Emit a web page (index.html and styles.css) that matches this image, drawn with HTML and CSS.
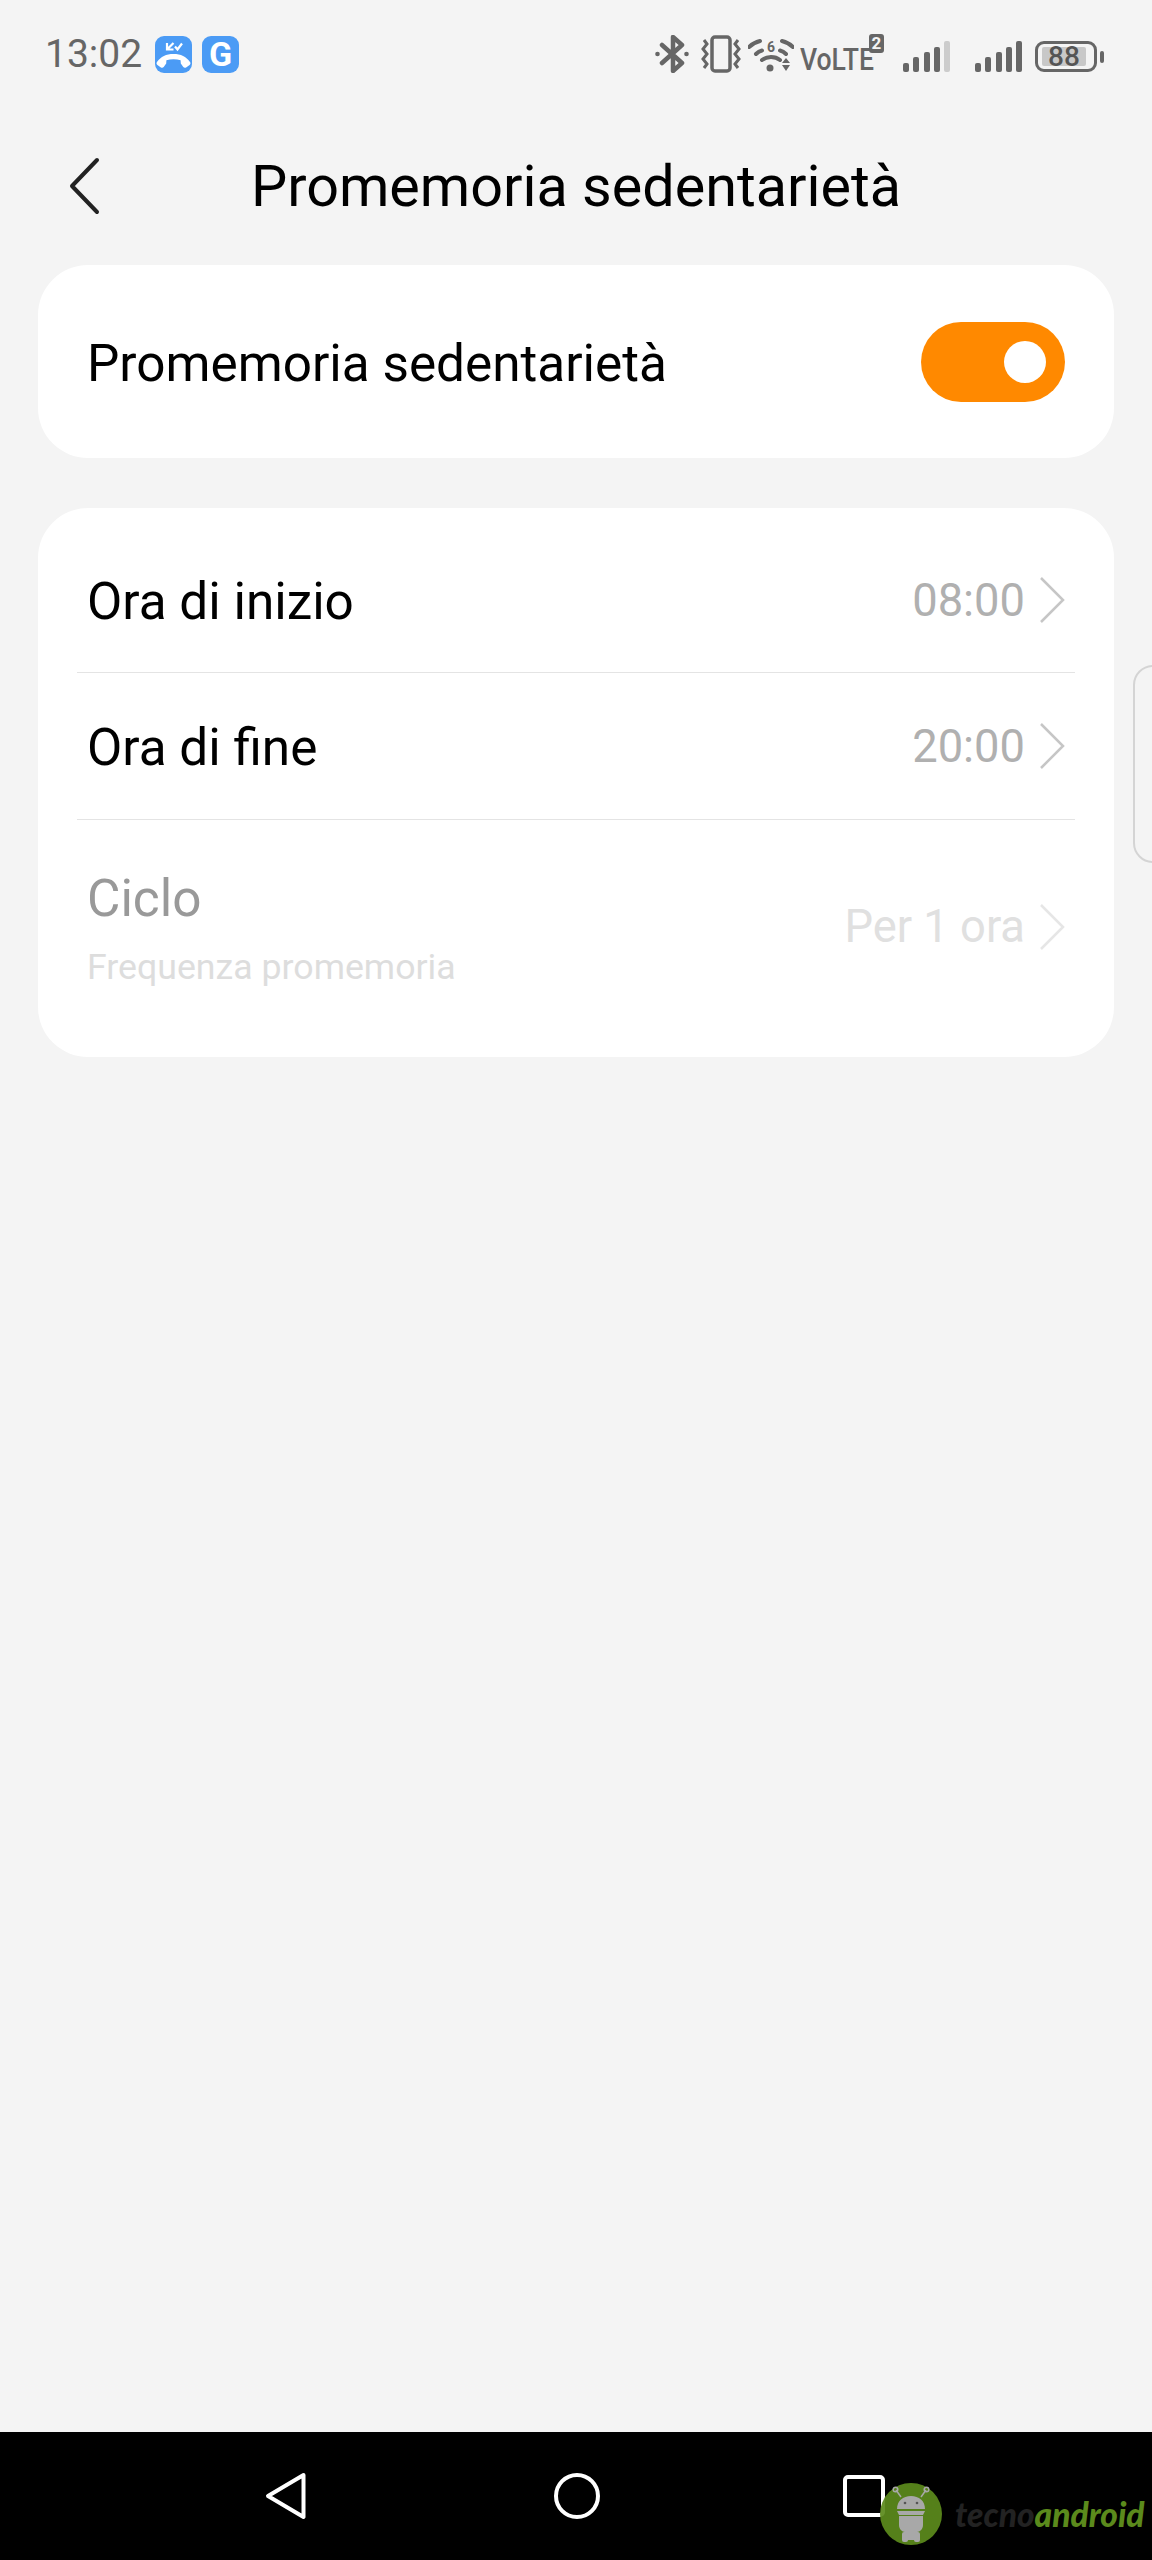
FILE: index.html
```html
<!DOCTYPE html>
<html>
<head>
  <meta charset="utf-8">
  <title>Promemoria sedentarietà</title>
  <link rel="stylesheet" href="styles.css">
</head>
<body>
  <!-- Status bar -->
  <div class="status-bar">
    <div class="status-left">
      <span class="clock">13:02</span>
      <span class="app-badge">
        <svg width="37" height="37" viewBox="0 0 37 37">
          <path d="M2 26c4-5.500 9-8 16.500-8s12.500 2.500 16.500 8c.8 1 .6 2.200-.4 3l-3.500 2.400c-1 .6-2.200.4-3-.6l-2.300-3.300-.2-3.300c-4.200-1.200-10-1.200-14.200 0l-.2 3.300-2.300 3.300c-.8 1-2 1.200-3 .6L2.400 29c-1-.8-1.200-2-.4-3z" fill="#fff"/>
          <path d="M12 7v6.500h6.500M12.500 13l6-6M20 10.500l2.500 3 4.500-6" fill="none" stroke="#fff" stroke-width="2.200"/>
        </svg>
      </span>
      <span class="app-badge app-letter">G</span>
    </div>
    <div class="status-right">
      <svg class="icon-bt" width="34" height="38" viewBox="0 0 34 38">
        <path d="M7 10l20 18-9 8V2l9 8L7 28" fill="none" stroke="#666" stroke-width="4.500" stroke-linejoin="round" stroke-linecap="round"/>
        <circle cx="2.500" cy="19" r="2.300" fill="#666"/>
        <circle cx="31.500" cy="19" r="2.300" fill="#666"/>
      </svg>
      <svg class="icon-vib" width="40" height="38" viewBox="0 0 40 38">
        <rect x="11" y="2" width="18" height="34" rx="3" fill="none" stroke="#666" stroke-width="3.500"/>
        <path d="M3 5l3 4-4 5 4 5-4 5 4 5-3 4M37 5l-3 4 4 5-4 5 4 5-4 5 3 4" fill="none" stroke="#666" stroke-width="3"/>
      </svg>
      <svg class="icon-wifi" width="46" height="38" viewBox="0 0 46 38">
        <path d="M1 12c3-3 7-5 11-6M34 6c4 1 8 3 11 6M8 19c2-2 4-3 6-3.500M32 15.500c2 .5 4 1.500 6 3.500M14 25c5-4 13-4 18 0" fill="none" stroke="#666" stroke-width="4" stroke-linecap="round"/>
        <text class="wifi-six" x="23" y="17" text-anchor="middle">6</text>
        <circle cx="22" cy="33" r="3.500" fill="#666"/>
        <path d="M34 28l4-5 4 5zM34 30h8l-4 6z" fill="#666"/>
      </svg>
      <span class="volte"><span class="volte-text">VoLTE</span><span class="volte-two">2</span></span>
      <svg class="icon-signal" width="47" height="32" viewBox="0 0 47 32">
        <rect x="0" y="22" width="6" height="9" rx="2" fill="#666"/>
        <rect x="10" y="16" width="6" height="15" rx="2" fill="#666"/>
        <rect x="21" y="11" width="6" height="20" rx="2" fill="#666"/>
        <rect x="31" y="6" width="6" height="25" rx="2" fill="#666"/>
        <rect x="41" y="0" width="6" height="31" rx="2" fill="#ccc"/>
      </svg>
      <svg class="icon-signal second" width="47" height="32" viewBox="0 0 47 32">
        <rect x="0" y="22" width="6" height="9" rx="2" fill="#666"/>
        <rect x="10" y="16" width="6" height="15" rx="2" fill="#666"/>
        <rect x="21" y="11" width="6" height="20" rx="2" fill="#666"/>
        <rect x="31" y="6" width="6" height="25" rx="2" fill="#666"/>
        <rect x="41" y="0" width="6" height="31" rx="2" fill="#666"/>
      </svg>
      <div class="battery">
        <span class="battery-body"><span class="battery-fill">88</span></span>
        <span class="battery-nub"></span>
      </div>
    </div>
  </div>

  <!-- Header -->
  <div class="header">
    <svg class="back" width="32" height="58" viewBox="0 0 32 58">
      <path d="M29 3L4 29l25 26" fill="none" stroke="#222" stroke-width="4" stroke-linecap="round" stroke-linejoin="round"/>
    </svg>
    <h1 class="title">Promemoria sedentarietà</h1>
  </div>

  <div class="content">
    <div class="card card-switch">
      <span class="label">Promemoria sedentarietà</span>
      <span class="toggle"><span class="knob"></span></span>
    </div>

    <div class="card card-list">
      <div class="row row-first">
        <span class="label">Ora di inizio</span>
        <span class="value">08:00</span>
        <svg class="chevron" width="26" height="48" viewBox="0 0 26 48"><path d="M2 2l22 22L2 46" fill="none" stroke="#c6c6c6" stroke-width="2.500"/></svg>
      </div>
      <div class="divider"></div>
      <div class="row row-second">
        <span class="label">Ora di fine</span>
        <span class="value">20:00</span>
        <svg class="chevron" width="26" height="48" viewBox="0 0 26 48"><path d="M2 2l22 22L2 46" fill="none" stroke="#c6c6c6" stroke-width="2.500"/></svg>
      </div>
      <div class="divider"></div>
      <div class="row row-third">
        <div class="label-stack">
          <span class="label muted">Ciclo</span>
          <span class="sub">Frequenza promemoria</span>
        </div>
        <span class="value faint">Per 1 ora</span>
        <svg class="chevron" width="26" height="48" viewBox="0 0 26 48"><path d="M2 2l22 22L2 46" fill="none" stroke="#e6e6e6" stroke-width="2.500"/></svg>
      </div>
    </div>
  </div>

  <div class="edge-handle"></div>

  <!-- Navigation bar -->
  <div class="nav-bar">
    <svg width="42" height="48" viewBox="0 0 42 48">
      <path d="M38.500 3L3 24l35.500 21z" fill="none" stroke="#fff" stroke-width="4" stroke-linejoin="round"/>
    </svg>
    <span class="nav-home"></span>
    <span class="nav-recent"></span>

    <div class="watermark">
      <svg width="62" height="62" viewBox="0 0 62 62">
        <circle cx="31" cy="31" r="31" fill="#5b8a1c" fill-opacity=".93"/>
        <path d="M21 14l-5-7M41 14l5-7" stroke="#a8a8a8" stroke-width="1.500"/>
        <circle cx="15.500" cy="6.500" r="2.300" fill="none" stroke="#a8a8a8" stroke-width="1.500"/>
        <circle cx="46.500" cy="6.500" r="2.300" fill="none" stroke="#a8a8a8" stroke-width="1.500"/>
        <path d="M17 26c0-8 6-13 14-13s14 5 14 13z" fill="#a8a8a8"/>
        <path d="M17 28h28l-2 4H19z" fill="#a8a8a8"/>
        <path d="M19 33h24v9c0 4-3 7-6 7v3h-3v5h-6v-5h-3v-3c-3 0-6-3-6-7z" fill="#a8a8a8"/>
        <rect x="22" y="49" width="6" height="10" rx="2" fill="#a8a8a8"/>
        <rect x="34" y="49" width="6" height="10" rx="2" fill="#a8a8a8"/>
        <circle cx="25" cy="20" r="1.300" fill="#555"/>
        <circle cx="37" cy="20" r="1.300" fill="#555"/>
      </svg>
      <span class="wm-text"><span class="wm-dark">tecno</span><span class="wm-green">android</span></span>
    </div>
  </div>
</body>
</html>
```

FILE: styles.css
```css
html, body {
  margin: 0;
  padding: 0;
}
body {
  width: 1152px;
  height: 2560px;
  overflow: hidden;
  display: flex;
  flex-direction: column;
  position: relative;
  background-color: #f4f4f4;
  color: #000;
  font-family: Roboto, "Noto Sans", sans-serif;
}

/* Status bar */
.status-bar {
  height: 108px;
  display: flex;
  align-items: center;
  justify-content: space-between;
  padding: 0 48px 0 45px;
}
.status-left {
  display: flex;
  align-items: center;
}
.clock {
  font-size: 39px;
  color: #666;
  width: 110px;
}
.app-badge {
  width: 37px;
  height: 37px;
  margin-right: 10px;
  border-radius: 9px;
  background-color: #4b9bf5;
  display: flex;
  align-items: center;
  justify-content: center;
}
.app-letter {
  color: #fff;
  font-size: 34px;
  font-weight: 700;
}
.status-right {
  display: flex;
  align-items: center;
}
.status-right svg {
  display: block;
}
.icon-vib {
  margin-left: 12px;
}
.icon-wifi {
  margin-left: 7px;
}
.wifi-six {
  font-size: 14px;
  font-weight: 700;
  fill: #666;
}
.volte {
  margin-left: 6px;
  width: 84px;
  height: 38px;
  position: relative;
  color: #666;
}
.volte-text {
  display: block;
  font-size: 32px;
  font-weight: 500;
  line-height: 48px;
  transform: scaleX(.83);
  transform-origin: left center;
  white-space: nowrap;
}
.volte-two {
  position: absolute;
  top: -1px;
  right: 0;
  width: 15px;
  height: 19px;
  border-radius: 3px;
  background-color: #666;
  color: #f4f4f4;
  font-size: 17px;
  font-weight: 700;
  line-height: 19px;
  text-align: center;
}
.icon-signal {
  margin-left: 19px;
  margin-top: 5px;
}
.icon-signal.second {
  margin-left: 25px;
}
.battery {
  margin-left: 13px;
  display: flex;
  align-items: center;
  margin-top: 5px;
}
.battery-body {
  width: 62px;
  height: 31px;
  box-sizing: border-box;
  border: 3px solid #666;
  border-radius: 9px;
  padding: 3px 8px 3px 4px;
  display: block;
}
.battery-fill {
  display: block;
  height: 19px;
  border-radius: 2px;
  background-color: #c8c8c8;
  color: #555;
  font-size: 28px;
  font-weight: 500;
  line-height: 19px;
  text-align: center;
}
.battery-nub {
  width: 4px;
  height: 12px;
  margin-left: 3px;
  border-radius: 2px;
  background-color: #666;
}

/* Header */
.header {
  height: 157px;
  display: flex;
  align-items: center;
  justify-content: center;
  position: relative;
}
.back {
  position: absolute;
  left: 68px;
  top: 49px;
}
.title {
  margin: 0;
  font-size: 57.500px;
  font-weight: 400;
}

/* Cards */
.content {
  flex: 1;
  display: flex;
  flex-direction: column;
  gap: 50px;
  padding: 0 38px;
}
.card {
  background-color: #fff;
  border-radius: 50px;
}
.card-switch {
  height: 193px;
  padding: 0 49px;
  display: flex;
  align-items: center;
  justify-content: space-between;
}
.card-list {
  padding: 20px 0 24px;
}
.label {
  font-size: 51.300px;
  line-height: 62px;
  padding-top: 4px;
}
.toggle {
  width: 144px;
  height: 80px;
  border-radius: 40px;
  background-color: #ff8900;
  display: flex;
  align-items: center;
  justify-content: flex-end;
  padding-right: 19px;
  box-sizing: border-box;
}
.knob {
  width: 42px;
  height: 42px;
  border-radius: 50%;
  background-color: #fff;
}
.row {
  display: flex;
  align-items: center;
  padding: 0 49px;
}
.row-first {
  height: 144px;
}
.row-second {
  height: 146px;
}
.row-third {
  height: 213px;
}
.row .label-stack, .row > .label {
  margin-right: auto;
}
.label-stack {
  display: flex;
  flex-direction: column;
}
.muted {
  color: #999;
}
.sub {
  margin-top: 15px;
  font-size: 35.700px;
  line-height: 44px;
  color: #ddd;
}
.value {
  font-size: 45.300px;
  color: #b0b0b0;
}
.faint {
  color: #e0e0e0;
}
.chevron {
  margin-left: 14px;
}
.divider {
  height: 1px;
  margin: 0 39px;
  background-color: #e4e4e4;
}

/* Side handle over the page edge */
.edge-handle {
  position: absolute;
  left: 1133px;
  top: 665px;
  width: 40px;
  height: 198px;
  box-sizing: border-box;
  border: 2px solid #d4d4d4;
  border-radius: 22px;
}

/* Navigation bar */
.nav-bar {
  height: 128px;
  position: relative;
  overflow: hidden;
  background-color: #000;
  display: flex;
  align-items: center;
  padding-left: 265px;
}
.nav-home {
  width: 46px;
  height: 46px;
  box-sizing: border-box;
  border: 4px solid #fff;
  border-radius: 50%;
  margin-left: 247px;
}
.nav-recent {
  width: 42px;
  height: 42px;
  box-sizing: border-box;
  border: 4px solid #fff;
  border-radius: 5px;
  margin-left: 243px;
}
.watermark {
  position: absolute;
  left: 880px;
  top: 51px;
  display: flex;
  align-items: center;
  gap: 13px;
}
.watermark svg {
  display: block;
}
.wm-text {
  font-family: Lato, sans-serif;
  font-size: 33.500px;
  font-weight: 900;
  font-style: italic;
  white-space: nowrap;
}
.wm-dark {
  color: #222;
}
.wm-green {
  color: #5b8a1c;
}
```
